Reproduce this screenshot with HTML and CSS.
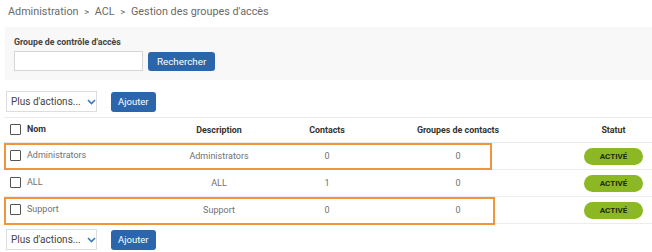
FILE: index.html
```html
<!DOCTYPE html>
<html lang="fr">
<head>
<meta charset="utf-8">
<link rel="stylesheet" href="styles.css">
</head>
<body>
<div class="page">
  <div class="crumbs">Administration <span class="sep">&gt;</span> ACL <span class="sep">&gt;</span> Gestion des groupes d'accès</div>
  <div class="filter">
    <div class="flabel">Groupe de contrôle d'accès</div>
    <div class="frow">
      <div class="input"></div>
      <button class="btn">Rechercher</button>
    </div>
  </div>
  <div class="actions">
    <div class="select"><span>Plus d'actions...</span><svg class="chev" width="9" height="6" viewBox="0 0 9 6"><path d="M1 1l3.5 3.5L8 1" fill="none" stroke="#3a78c3" stroke-width="1.6"/></svg></div>
    <button class="btn">Ajouter</button>
  </div>
  <div class="tablewrap">
    <table class="grid">
      <thead>
        <tr>
          <th class="c-name"><span class="cb"></span>Nom</th>
          <th class="c-desc">Description</th>
          <th class="c-cont">Contacts</th>
          <th class="c-grp">Groupes de contacts</th>
          <th class="c-stat">Statut</th>
        </tr>
      </thead>
      <tbody>
        <tr>
          <td class="c-name"><span class="cb"></span>Administrators</td>
          <td class="c-desc">Administrators</td>
          <td class="c-cont">0</td>
          <td class="c-grp">0</td>
          <td class="c-stat"><span class="badge">ACTIVÉ</span></td>
        </tr>
        <tr>
          <td class="c-name"><span class="cb"></span>ALL</td>
          <td class="c-desc">ALL</td>
          <td class="c-cont">1</td>
          <td class="c-grp">0</td>
          <td class="c-stat"><span class="badge">ACTIVÉ</span></td>
        </tr>
        <tr>
          <td class="c-name"><span class="cb"></span>Support</td>
          <td class="c-desc">Support</td>
          <td class="c-cont">0</td>
          <td class="c-grp">0</td>
          <td class="c-stat"><span class="badge">ACTIVÉ</span></td>
        </tr>
      </tbody>
    </table>
    <div class="hl hl1"></div>
    <div class="hl hl2"></div>
  </div>
  <div class="actions bottom">
    <div class="select"><span>Plus d'actions...</span><svg class="chev" width="9" height="6" viewBox="0 0 9 6"><path d="M1 1l3.5 3.5L8 1" fill="none" stroke="#3a78c3" stroke-width="1.6"/></svg></div>
    <button class="btn">Ajouter</button>
  </div>
</div>
</body>
</html>
```
FILE: styles.css
```css
html, body {
  margin: 0;
  padding: 0;
  background: #fff;
}
body {
  font-family: Roboto, "Liberation Sans", Arial, sans-serif;
  color: #555;
}
.page {
  width: 652px;
  height: 252px;
  overflow: hidden;
  padding: 5px 0 0 0;
  box-sizing: border-box;
}
.crumbs {
  margin-left: 8px;
  font-size: 10.8px;
  line-height: 14px;
  color: #6a6a6a;
  white-space: nowrap;
}
.crumbs .sep {
  margin: 0 3px;
  font-size: 9.5px;
}
.filter {
  margin: 8px 0 0 5px;
  height: 53px;
  background: #f8f8f8;
  box-sizing: border-box;
  padding: 10px 0 0 9px;
}
.flabel {
  font-size: 8.8px;
  font-weight: 700;
  color: #444;
  line-height: 10px;
  white-space: nowrap;
}
.frow {
  display: flex;
  align-items: center;
  margin-top: 4px;
  gap: 5px;
}
.input {
  width: 129px;
  height: 20px;
  box-sizing: border-box;
  background: #fff;
  border: 1px solid #d6d6d6;
}
.btn {
  font-family: Roboto, "Liberation Sans", Arial, sans-serif;
  background: #2b66ad;
  color: #fff;
  border: 0;
  border-radius: 3px;
  font-size: 9.8px;
  height: 19px;
  padding: 0 9px;
  line-height: 19px;
  white-space: nowrap;
}
.actions {
  display: flex;
  align-items: center;
  margin: 11px 0 0 6px;
  gap: 14px;
}
.actions .btn {
  height: 20px;
  line-height: 20px;
  padding: 0 7px;
  font-size: 9.5px;
}
.actions.bottom {
  margin-top: 5px;
}
.select {
  width: 91px;
  height: 21px;
  box-sizing: border-box;
  border: 1px solid #ddd;
  font-size: 10px;
  color: #444;
  display: flex;
  align-items: center;
  padding-left: 4px;
  gap: 6px;
  white-space: nowrap;
}
.tablewrap {
  position: relative;
  margin: 5px 0 0 4px;
  width: 648px;
}
.grid {
  border-collapse: collapse;
  width: 648px;
  table-layout: fixed;
  font-size: 9px;
}
.grid th {
  height: 24px;
  font-weight: 700;
  color: #333;
  font-size: 8.9px;
  border-top: 1px solid #eaeaea;
  border-bottom: 1px solid #eaeaea;
  padding: 0;
  white-space: nowrap;
}
.grid td {
  height: 26px;
  border-bottom: 1px solid #ececec;
  color: #707070;
  padding: 0;
  white-space: nowrap;
}
.c-name {
  width: 140px;
  text-align: left;
  padding-left: 6px !important;
}
.c-desc {
  width: 138px;
  text-align: center;
}
.c-cont {
  width: 78px;
  text-align: center;
}
.c-grp {
  width: 209px;
  text-align: center;
  padding-right: 25px !important;
  box-sizing: border-box;
}
.c-stat {
  text-align: center;
}
.cb {
  display: inline-block;
  width: 11px;
  height: 11px;
  box-sizing: border-box;
  border: 1.5px solid #555;
  border-radius: 1px;
  vertical-align: middle;
  margin-right: 6px;
  position: relative;
  top: -1px;
}
.badge {
  display: inline-block;
  width: 59px;
  height: 17px;
  line-height: 17px;
  border-radius: 9px;
  background: #8cb824;
  color: #1c2b05;
  font-size: 8px;
  font-weight: 700;
  text-align: center;
}
.hl {
  position: absolute;
  left: 0;
  border: 2px solid #f0953a;
  box-sizing: border-box;
  pointer-events: none;
}
.hl1 {
  top: 26px;
  width: 488px;
  height: 27px;
}
.hl2 {
  top: 80px;
  width: 491px;
  height: 28px;
}
```
